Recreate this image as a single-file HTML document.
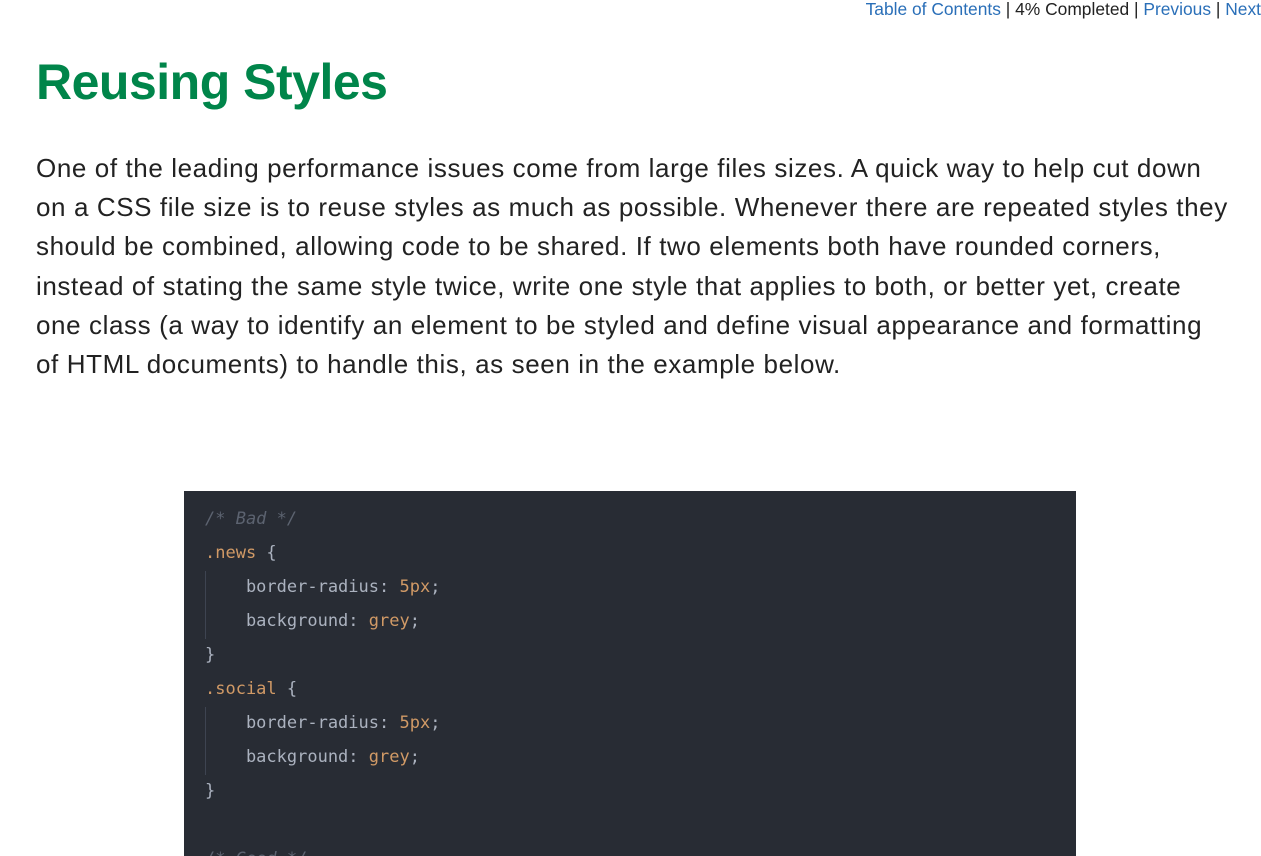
<!DOCTYPE html>
<html><head><style>
body{margin:0;background:#fff;width:1261px;height:856px;overflow:hidden;position:relative;font-family:"Liberation Sans",sans-serif;}
.nav{position:absolute;right:0;top:0;font-size:17.4px;color:#222;line-height:19px;white-space:nowrap}
.nav a{color:#2a6fb8;text-decoration:none}
h1{position:absolute;left:36px;top:50px;margin:0;font-size:50px;font-weight:bold;color:#00854a;letter-spacing:-0.5px;line-height:64px}
p{position:absolute;left:36px;top:149px;width:1220px;margin:0;font-size:26px;line-height:39.2px;color:#222;letter-spacing:0.6px;white-space:nowrap}
.code{position:absolute;left:184px;top:491px;width:892px;height:365px;background:#282c34;font-family:"DejaVu Sans Mono",monospace;font-size:17px;color:#abb2bf;overflow:hidden}
.l{position:absolute;left:21px;white-space:pre;line-height:20px}
.c{color:#5c6370;font-style:italic}.o{color:#d19a66}
.bar{position:absolute;left:21px;width:1px;background:#3e4451}
</style></head><body>
<div class="nav"><a>Table of Contents</a> | 4% Completed | <a>Previous</a> | <a>Next</a></div>
<h1>Reusing Styles</h1>
<p>One of the leading performance issues come from large files sizes. A quick way to help cut down<br>on a CSS file size is to reuse styles as much as possible. Whenever there are repeated styles they<br>should be combined, allowing code to be shared. If two elements both have rounded corners,<br>instead of stating the same style twice, write one style that applies to both, or better yet, create<br>one class (a way to identify an element to be styled and define visual appearance and formatting<br>of HTML documents) to handle this, as seen in the example below.</p>
<div class="code">
<div class="bar" style="top:80px;height:68px"></div>
<div class="bar" style="top:216px;height:68px"></div>
<div class="l c" style="top:18px">/* Bad */</div>
<div class="l" style="top:52px"><span class="o">.news</span> {</div>
<div class="l" style="top:86px">    border-radius: <span class="o">5px</span>;</div>
<div class="l" style="top:120px">    background: <span class="o">grey</span>;</div>
<div class="l" style="top:154px">}</div>
<div class="l" style="top:188px"><span class="o">.social</span> {</div>
<div class="l" style="top:222px">    border-radius: <span class="o">5px</span>;</div>
<div class="l" style="top:256px">    background: <span class="o">grey</span>;</div>
<div class="l" style="top:290px">}</div>
<div class="l c" style="top:358px">/* Good */</div>
</div>
</body></html>
